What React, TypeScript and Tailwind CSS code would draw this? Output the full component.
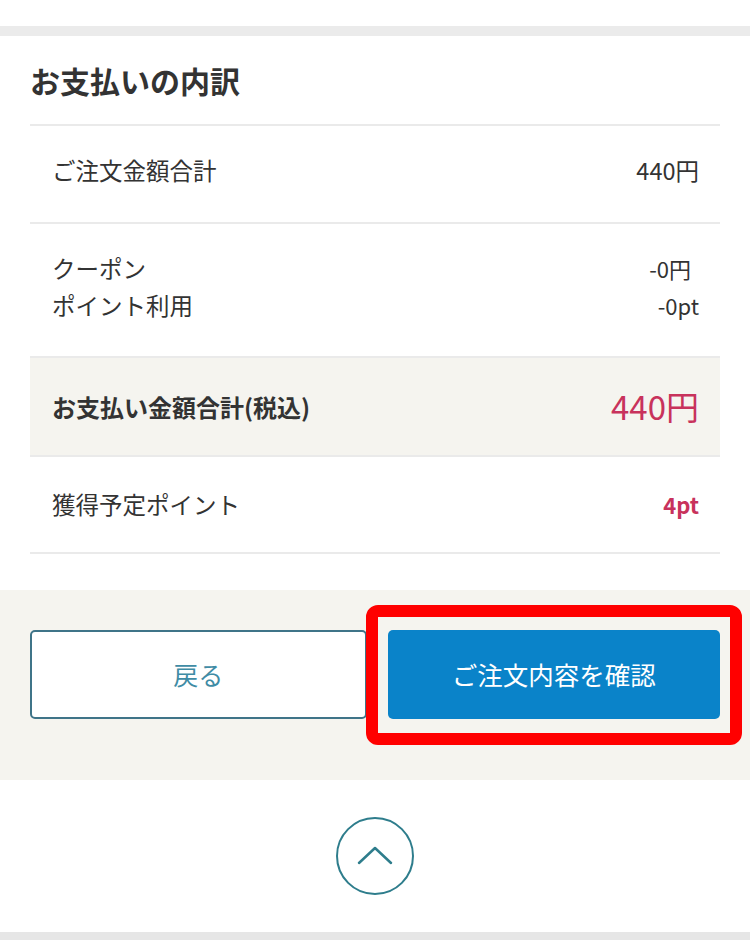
const font = { fontFamily: '"Noto Sans CJK JP", "Noto Sans", sans-serif' };

export default function App() {
    return (
        <div className="w-[750px] h-[940px] bg-white text-[#333333] flex flex-col" style={font}>
            <div className="h-[26px] shrink-0" />
            <div className="h-[10px] bg-[#ebebeb] shrink-0" />

            {/* Breakdown */}
            <div className="px-[30px]">
                <h2 className="h-[88px] flex items-center text-[30px] font-bold text-[#333333]">
                    お支払いの内訳
                </h2>
                <div className="border-t-2 border-[#eaeaea]">
                    <div className="h-[96px] flex items-center justify-between pl-[22px] pr-[21px] pb-[6px] text-[23.5px]">
                        <span>ご注文金額合計</span>
                        <span>440円</span>
                    </div>
                </div>
                <div className="border-t-2 border-[#eaeaea]">
                    <div className="h-[132px] flex flex-col justify-center gap-[4px] pl-[22px] pr-[21px] pb-[6px] text-[23.5px] leading-[33px]">
                        <div className="flex justify-between">
                            <span>クーポン</span>
                            <span className="pr-[8px] text-[22px]">-0円</span>
                        </div>
                        <div className="flex justify-between">
                            <span>ポイント利用</span>
                            <span className="text-[22px]">-0pt</span>
                        </div>
                    </div>
                </div>
                <div className="border-t-2 border-[#eaeaea] bg-[#f5f4ef]">
                    <div className="h-[97px] flex items-center justify-between pl-[22px] pr-[21px]">
                        <span className="text-[24px] font-bold">お支払い金額合計(税込)</span>
                        <span className="text-[33px] text-[#c8325c]">440円</span>
                    </div>
                </div>
                <div className="border-t-2 border-[#eaeaea] border-b-2">
                    <div className="h-[95px] flex items-center justify-between pl-[22px] pr-[21px]">
                        <span className="text-[23.5px]">獲得予定ポイント</span>
                        <span className="text-[22px] font-bold text-[#c8325c]">4pt</span>
                    </div>
                </div>
            </div>

            <div className="h-[36px] shrink-0" />

            {/* Actions */}
            <div className="h-[190px] bg-[#f5f4ef] px-[30px] pt-[40px] flex items-start gap-[21px] shrink-0">
                <button className="flex-1 h-[89px] bg-white border-2 border-[#3f7488] rounded-[5px] text-[25px] text-[#3f8ca5]">
                    戻る
                </button>
                <div className="relative flex-1">
                    <button className="w-full h-[89px] bg-[#0a83c9] rounded-[5px] text-[25.5px] text-white">
                        ご注文内容を確認
                    </button>
                    <div className="absolute -left-[22px] -right-[22px] -top-[25px] -bottom-[26px] border-[12px] border-[#ff0000] rounded-[12px] pointer-events-none" />
                </div>
            </div>

            {/* Page top */}
            <div className="flex-1 flex items-center justify-center">
                <button className="w-[78px] h-[78px] rounded-full border-2 border-[#2e7d8c] flex items-center justify-center text-[#2e7d8c]">
                    <svg width="40" height="24" viewBox="0 0 40 24" fill="none">
                        <polyline points="4,19 20,4 36,19" stroke="currentColor" strokeWidth="2.5" strokeLinecap="round" strokeLinejoin="round" />
                    </svg>
                </button>
            </div>
            <div className="h-[8px] bg-[#e6e6e6] shrink-0" />
        </div>
    );
}
